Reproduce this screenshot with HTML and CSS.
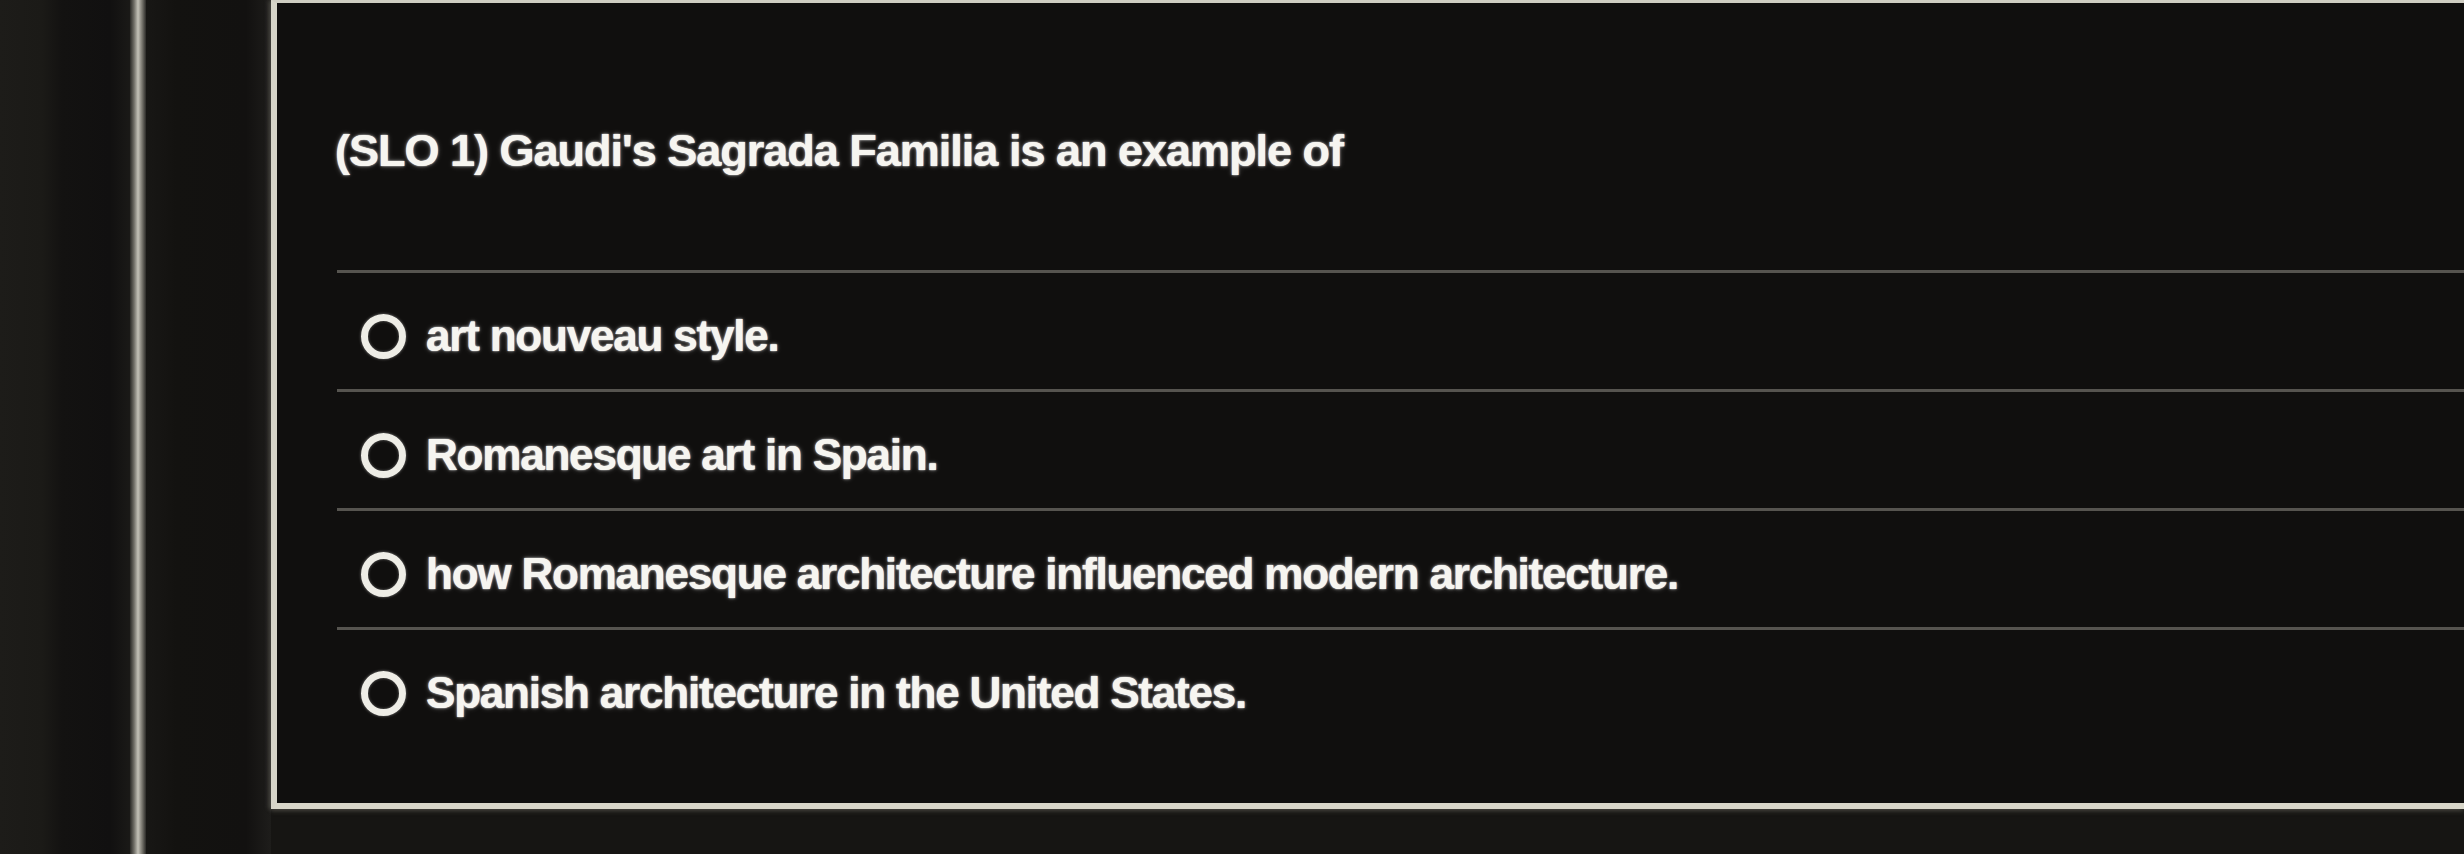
FILE: index.html
```html
<!DOCTYPE html>
<html lang="en">
<head>
<meta charset="utf-8">
<title>Quiz question</title>
<link rel="stylesheet" href="styles.css">
</head>
<body>
<div class="screen">
  <div class="edge"></div>
  <div class="stripe"></div>
  <div class="gutter"></div>
  <div class="card-area">
    <section class="card">
      <h1 class="question">(SLO 1) Gaudi's Sagrada Familia is an example of</h1>
      <ul class="options">
        <li class="option"><span class="radio"></span><span class="label">art nouveau style.</span></li>
        <li class="option"><span class="radio"></span><span class="label">Romanesque art in Spain.</span></li>
        <li class="option"><span class="radio"></span><span class="label">how Romanesque architecture influenced modern architecture.</span></li>
        <li class="option"><span class="radio"></span><span class="label">Spanish architecture in the United States.</span></li>
      </ul>
    </section>
  </div>
</div>
</body>
</html>
```

FILE: styles.css
```css
html, body {
  margin: 0;
  padding: 0;
}

body {
  width: 2464px;
  height: 854px;
  overflow: hidden;
  background: #151412;
  font-family: "Liberation Sans", Arial, sans-serif;
}

.screen {
  display: flex;
  width: 2464px;
  height: 854px;
}

.edge {
  width: 130px;
  flex: none;
  background: linear-gradient(to right, #1d1c19 0px, #1b1a17 42px, #131211 62px, #111010 110px, #1a1917 130px);
}

.stripe {
  width: 16px;
  flex: none;
  background: linear-gradient(to right, #2a2926 0%, #6f6d66 25%, #c4c2b8 50%, #7a7870 75%, #2a2926 100%);
}

.gutter {
  width: 125px;
  flex: none;
  background: linear-gradient(to right, #181715 0px, #131210 30px, #121110 100px, #1e1d1b 125px);
}

.card-area {
  flex: 1;
  display: flex;
  flex-direction: column;
  background: #161513;
}

.card {
  box-sizing: border-box;
  height: 809px;
  background: #100f0e;
  border-top: 3px solid #cfcdc2;
  border-left: 6px solid #d6d4c8;
  border-bottom: 6px solid #d8d6c9;
  box-shadow: -3px 0 4px rgba(120, 118, 110, 0.35), 0 3px 4px rgba(120, 118, 110, 0.3);
  padding: 123px 0 0 60px;
}

.question {
  margin: 0 0 94px -2px;
  font-size: 45px;
  line-height: 50px;
  font-weight: bold;
  letter-spacing: -1px;
  color: #f6f5f0;
  text-shadow: 0 0 1px #ffffff, 0 0 3px rgba(255, 255, 255, 0.6), 0 0 6px rgba(255, 255, 255, 0.22);
  white-space: nowrap;
}

.options {
  list-style: none;
  margin: 0;
  padding: 0;
}

.option {
  display: flex;
  align-items: center;
  gap: 20px;
  border-top: 3px solid #56544f;
  padding: 38px 0 28px 24px;
}

.radio {
  width: 31px;
  height: 31px;
  flex: none;
  border: 7px solid #eeede6;
  border-radius: 50%;
  box-shadow: 0 0 3px rgba(255, 255, 255, 0.45), inset 0 0 3px rgba(255, 255, 255, 0.35);
}

.label {
  font-size: 44px;
  line-height: 50px;
  font-weight: bold;
  letter-spacing: -1.2px;
  color: #f6f5f0;
  text-shadow: 0 0 1px #ffffff, 0 0 3px rgba(255, 255, 255, 0.6), 0 0 6px rgba(255, 255, 255, 0.22);
  white-space: nowrap;
}
```
